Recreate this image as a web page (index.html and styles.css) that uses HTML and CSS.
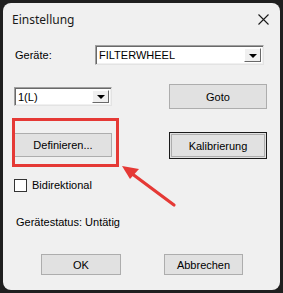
FILE: index.html
```html
<!DOCTYPE html>
<html lang="de">
<head>
    <meta charset="UTF-8">
    <title>Einstellung</title>
    <link rel="stylesheet" href="styles.css">
</head>
<body>

<div class="window">
    <div class="titlebar">
        <span class="title">Einstellung</span>
        <span class="close">
            <svg width="11" height="11" viewBox="0 0 11 11"><path d="M0.5 0.5 L10.5 10.5 M10.5 0.5 L0.5 10.5" stroke="#1a1a1a" stroke-width="1.1"/></svg>
        </span>
    </div>

    <div class="content">
        <div class="row row-device">
            <span class="label">Geräte:</span>
            <div class="combo combo-wide">
                <span class="combo-text">FILTERWHEEL</span>
                <span class="combo-btn"><span class="tri"></span></span>
            </div>
        </div>

        <div class="row row-pos">
            <div class="combo combo-small">
                <span class="combo-text">1(L)</span>
                <span class="combo-btn"><span class="tri"></span></span>
            </div>
            <button class="btn btn-right">Goto</button>
        </div>

        <div class="row row-def">
            <button class="btn btn-left">Definieren...</button>
            <button class="btn btn-right btn-default">Kalibrierung</button>
        </div>

        <div class="row row-check">
            <span class="checkbox"></span>
            <span class="check-label">Bidirektional</span>
        </div>

        <div class="row row-status">
            <span class="status">Gerätestatus: Untätig</span>
        </div>

        <div class="row row-actions">
            <button class="btn btn-ok">OK</button>
            <button class="btn btn-cancel">Abbrechen</button>
        </div>
    </div>
</div>

<!-- annotation drawn over the dialog -->
<div class="highlight"></div>
<svg class="pointer" width="283" height="293" viewBox="0 0 283 293">
    <line x1="174" y1="205" x2="131" y2="173" stroke="#e53935" stroke-width="3.2" stroke-linecap="round"/>
    <polygon points="122,166 139,169 130,179" fill="#e53935"/>
</svg>

</body>
</html>
```

FILE: styles.css
```css
body {
    margin: 0;
    background-color: #1f1f1f;
    font-family: "Liberation Sans", Arial, sans-serif;
    font-size: 11px;
    color: #000;
    width: 283px;
    height: 293px;
    overflow: hidden;
}
.window {
    margin: 3px 0 0 3px;
    width: 277px;
    height: 287px;
    background-color: #f0f0f0;
    border-radius: 8px;
}
.titlebar {
    height: 32px;
    display: flex;
    align-items: center;
    justify-content: space-between;
    padding: 0 11px 0 9px;
}
.title {
    font-family: "Noto Sans", "Open Sans", sans-serif;
    font-size: 12px;
    color: #1a1a1a;
}
.close {
    display: flex;
    margin-top: 1px;
}
.content {
    padding-left: 11px;
}
.row {
    display: flex;
    align-items: center;
}
.row-device {
    margin-top: 10px;
    height: 20px;
}
.label {
    width: 80px;
    padding-left: 1px;
}
.combo {
    box-sizing: border-box;
    height: 20px;
    background-color: #fff;
    border: 1px solid;
    border-color: #a0a0a0 #e3e3e3 #e3e3e3 #a0a0a0;
    box-shadow: inset 1px 1px 0 #696969, inset -1px -1px 0 #f0f0f0;
    display: flex;
    align-items: center;
    padding: 2px;
}
.combo-wide {
    width: 169px;
}
.combo-small {
    width: 98px;
    height: 19px;
}
.combo-text {
    flex: 1;
    padding-left: 1px;
}
.combo-btn {
    box-sizing: border-box;
    width: 17px;
    height: 100%;
    background-color: #f0f0f0;
    border: 1px solid;
    border-color: #fff #696969 #696969 #fff;
    display: flex;
    align-items: center;
    justify-content: center;
}
.tri {
    width: 0;
    height: 0;
    border-left: 4px solid transparent;
    border-right: 4px solid transparent;
    border-top: 4px solid #000;
    margin-top: 1px;
}
.row-pos {
    margin-top: 19px;
    height: 25px;
}
.row-def {
    margin-top: 23px;
    height: 25px;
}
.btn {
    box-sizing: border-box;
    font-family: "Liberation Sans", Arial, sans-serif;
    font-size: 11px;
    color: #000;
    background-color: #e1e1e1;
    border: 1px solid #adadad;
    padding: 0;
    height: 25px;
}
.btn-left {
    width: 98px;
    height: 24px;
}
.btn-right {
    width: 98px;
    margin-left: auto;
    margin-right: 13px;
}
.row-pos .btn-right {
    margin-left: auto;
}
.btn-default {
    border: 1px solid #1a1a1a;
    box-shadow: inset 0 0 0 1px #e1e1e1, inset 0 0 0 2px #adadad;
    height: 27px;
    margin-top: 2px;
}
.row-check {
    margin-top: 21px;
    height: 14px;
}
.checkbox {
    box-sizing: border-box;
    width: 13px;
    height: 13px;
    background-color: #fff;
    border: 1px solid #333;
}
.check-label {
    margin-left: 5px;
}
.row-status {
    margin-top: 23px;
    height: 14px;
}
.status {
    padding-left: 2px;
}
.row-actions {
    margin-top: 25px;
}
.btn-ok {
    width: 80px;
    height: 21px;
    margin-left: 27px;
}
.btn-cancel {
    width: 79px;
    height: 21px;
    margin-left: 43px;
}
.highlight {
    position: absolute;
    left: 12px;
    top: 118px;
    width: 101px;
    height: 43px;
    border: 3px solid #e53935;
}
.pointer {
    position: absolute;
    left: 0;
    top: 0;
}
```
